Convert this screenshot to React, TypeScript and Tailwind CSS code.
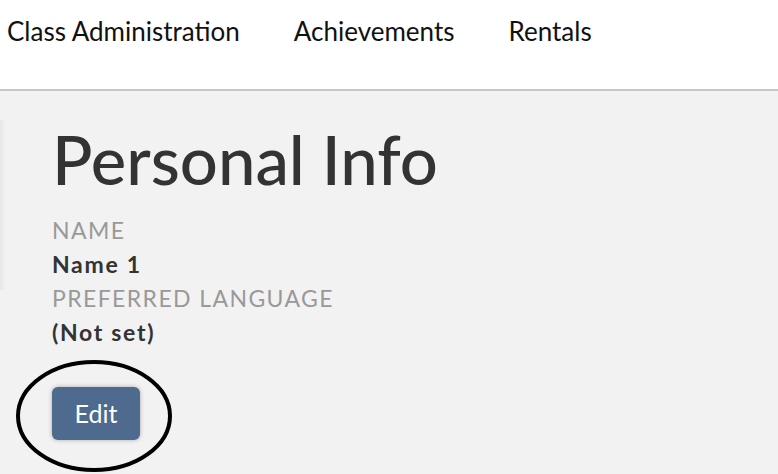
import React from "react";

const navItems = ["Class Administration", "Achievements", "Rentals"];

export default function App() {
  return (
    <div className="w-[778px] h-[474px] overflow-hidden bg-[#f2f2f2] font-['Lato',sans-serif] relative">
      <div className="h-[91px] bg-white border-b-2 border-[#c6c6c6] flex items-start pt-[13px] pl-[7px] gap-[54px]">
        {navItems.map((item) => (
          <span key={item} className="text-[26px] text-[#111] leading-[36px]">
            {item}
          </span>
        ))}
      </div>
      <div className="absolute left-0 top-[120px] w-[6px] h-[170px] bg-gradient-to-r from-[#e6e6e6] to-[#f2f2f2]" />
      <div className="pl-[52px] pt-[20px]">
        <h1 className="text-[67px] leading-[96px] text-[#333] font-medium">Personal Info</h1>
        <div className="mt-[6px] text-[23px] leading-[34px]">
          <div className="text-[#999] tracking-[1.4px]">NAME</div>
          <div className="text-[#333] font-bold tracking-[1.7px]">Name 1</div>
          <div className="text-[#999] tracking-[1.4px]">PREFERRED LANGUAGE</div>
          <div className="text-[#333] font-bold tracking-[1.7px]">(Not set)</div>
        </div>
        <div className="relative mt-[38px] w-fit">
          <button className="w-[88px] h-[53px] rounded-[6px] bg-[#4f6a8f] text-white text-[25px] shadow-[0_0_4px_rgba(0,0,0,0.3)]">
            Edit
          </button>
          <svg
            className="absolute left-[-37px] top-[-28px]"
            width="160"
            height="116"
            viewBox="0 0 160 116"
          >
            <ellipse cx="79" cy="57" rx="76" ry="54" fill="none" stroke="#000" strokeWidth="4" />
          </svg>
        </div>
      </div>
    </div>
  );
}
